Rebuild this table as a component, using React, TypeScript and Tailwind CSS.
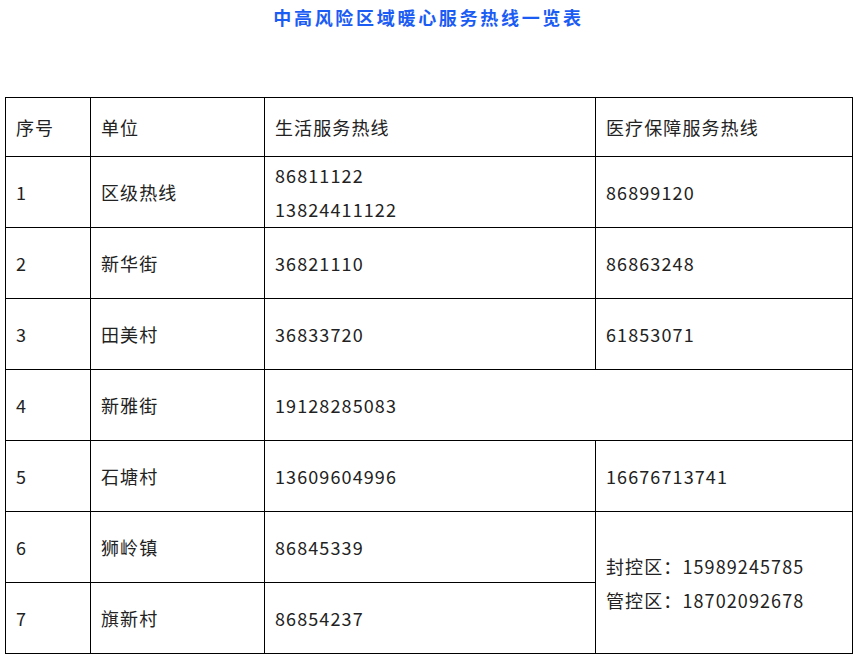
const rows: { no: string; unit: string; life: string[]; med?: string }[] = [
  { no: '1', unit: '区级热线', life: ['86811122', '13824411122'], med: '86899120' },
  { no: '2', unit: '新华街', life: ['36821110'], med: '86863248' },
  { no: '3', unit: '田美村', life: ['36833720'], med: '61853071' },
];

const cell = 'border border-black px-[10px] align-middle';

export default function App() {
  return (
    <div
      className="w-[857px] h-[663px] bg-white text-[#222] overflow-hidden"
      style={{ fontFamily: '"Microsoft YaHei", "Noto Sans CJK SC", "Noto Sans", sans-serif' }}
    >
      <h1 className="pt-[4px] h-[97px] text-center text-[18px] leading-[26px] font-bold tracking-[2.7px] text-[#1b5cf4]">
        中高风险区域暖心服务热线一览表
      </h1>
      <div className="pl-[5px]">
        <table className="border-collapse w-[847px] table-fixed text-[18px] tracking-[1.1px] leading-[34px]">
          <colgroup>
            <col className="w-[85px]" />
            <col className="w-[174px]" />
            <col className="w-[331px]" />
            <col className="w-[257px]" />
          </colgroup>
          <tbody>
            <tr className="h-[59px]">
              <td className={cell}>序号</td>
              <td className={cell}>单位</td>
              <td className={cell}>生活服务热线</td>
              <td className={cell}>医疗保障服务热线</td>
            </tr>
            {rows.map((r) => (
              <tr key={r.no} className="h-[71px]">
                <td className={cell}>{r.no}</td>
                <td className={cell}>{r.unit}</td>
                <td className={cell}>
                  {r.life.map((l) => (
                    <div key={l}>{l}</div>
                  ))}
                </td>
                <td className={cell}>{r.med}</td>
              </tr>
            ))}
            <tr className="h-[71px]">
              <td className={cell}>4</td>
              <td className={cell}>新雅街</td>
              <td className={cell} colSpan={2}>19128285083</td>
            </tr>
            <tr className="h-[71px]">
              <td className={cell}>5</td>
              <td className={cell}>石塘村</td>
              <td className={cell}>13609604996</td>
              <td className={cell}>16676713741</td>
            </tr>
            <tr className="h-[71px]">
              <td className={cell}>6</td>
              <td className={cell}>狮岭镇</td>
              <td className={cell}>86845339</td>
              <td className={cell} rowSpan={2}>
                <div>封控区：15989245785</div>
                <div>管控区：18702092678</div>
              </td>
            </tr>
            <tr className="h-[71px]">
              <td className={cell}>7</td>
              <td className={cell}>旗新村</td>
              <td className={cell}>86854237</td>
            </tr>
          </tbody>
        </table>
      </div>
    </div>
  );
}
